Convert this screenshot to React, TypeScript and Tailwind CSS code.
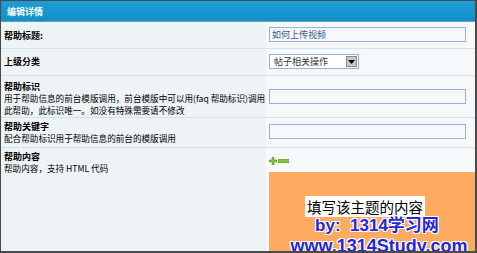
const font = { fontFamily: '"Noto Sans CJK SC", sans-serif' };

const Row = ({ label, desc, height, pt, children }: { label: string; desc?: string[]; height: string; pt: string; children?: React.ReactNode }) => (
    <div className={`grid grid-cols-[265px_1fr] border-b border-[#cfe3f2] ${height}`}>
        <div className={`bg-[#eef3f6] pl-[3px] ${pt} text-[9px] leading-[11px] text-black`}>
            <div className="font-bold">{label}</div>
            {desc && desc.map((d, i) => (
                <div key={i} className="whitespace-nowrap overflow-hidden text-[8.6px] leading-[12px]">{d}</div>
            ))}
        </div>
        <div className="bg-[#f6f8fa] pl-[3px]">{children}</div>
    </div>
);

const TextInput = ({ value = '' }: { value?: string }) => (
    <div className="w-[197px] h-[15px] border border-[#93b3d9] bg-[#f6f8fa] text-[9px] leading-[13px] pl-[2px] text-[#3a5a8a]">{value}</div>
);

const outline = '1px 1px 0 #fff, -1px -1px 0 #fff, 1px -1px 0 #fff, -1px 1px 0 #fff, 0 1px 0 #fff, 1px 0 0 #fff';

const App = () => {
    return (
        <div style={font} className="w-[477px] h-[253px] overflow-hidden border-l border-t border-r-2 border-b-2 border-[#4a4a4a] bg-[#f6f8fa] flex flex-col">
            <div className="h-[21px] shrink-0 bg-gradient-to-b from-[#1d9dd6] to-[#1390c8] border-b border-[#6c9db8] pl-[6px] pt-[5px] text-[9px] leading-[11px] font-bold text-white">
                编辑详情
            </div>

            <div className="flex flex-col">
                <Row label="帮助标题:" height="h-[27px]" pt="pt-[8px]">
                    <div className="pt-[5px]">
                        <TextInput value="如何上传视频" />
                    </div>
                </Row>

                <Row label="上级分类" height="h-[27px]" pt="pt-[7px]">
                    <div className="pt-[5px]">
                        <div className="w-[90px] h-[15px] border border-[#93b3d9] bg-white flex items-center text-[9px] leading-[13px] text-[#333]">
                            <span className="pl-[4px] flex-1">帖子相关操作</span>
                            <span className="w-[11px] h-[11px] mr-[1px] bg-[#c8c8c8] border border-[#8a8a8a] flex items-center justify-center">
                                <svg width="7" height="4" viewBox="0 0 7 4"><path d="M0 0h7L3.5 4z" fill="#000" /></svg>
                            </span>
                        </div>
                    </div>
                </Row>

                <Row
                    label="帮助标识"
                    desc={['用于帮助信息的前台模版调用，前台模版中可以用(faq 帮助标识)调用', '此帮助，此标识唯一。如没有特殊需要请不修改']}
                    height="h-[42px]"
                    pt="pt-[5px]"
                >
                    <div className="pt-[13px]">
                        <TextInput />
                    </div>
                </Row>

                <Row label="帮助关键字" desc={['配合帮助标识用于帮助信息的前台的模版调用']} height="h-[30px]" pt="pt-[3px]">
                    <div className="pt-[6px]">
                        <TextInput />
                    </div>
                </Row>

                <div className="grid grid-cols-[265px_1fr] h-[103px]">
                    <div className="bg-[#eef3f6] pl-[3px] pt-[3px] text-[9px] leading-[11px] text-black">
                        <div className="font-bold">帮助内容</div>
                        <div className="text-[8.6px] leading-[12px]">帮助内容，支持 HTML 代码</div>
                    </div>
                    <div className="bg-[#f6f8fa] pl-[3px] flex flex-col">
                        <div className="flex items-center gap-[1px] h-[24px] pt-[2px]">
                            <svg width="8" height="8" viewBox="0 0 8 8">
                                <path d="M3 0h2v3h3v2H5v3H3V5H0V3h3z" fill="#7cc43a" stroke="#4f8f1e" strokeWidth="0.5" />
                            </svg>
                            <svg width="11" height="4" viewBox="0 0 11 4">
                                <rect x="0.25" y="0.25" width="10.5" height="3.5" fill="#7cc43a" stroke="#4f8f1e" strokeWidth="0.5" />
                            </svg>
                        </div>
                        <div className="flex-1 bg-[#fdab60] flex flex-col items-center pt-[24px]">
                            <div className="bg-white text-black text-[14.5px] leading-[21px] px-[2px] ml-[-14px]">
                                填写该主题的内容
                            </div>
                            <div
                                className="text-[17px] leading-[17px] font-bold text-[#2626d6] mt-[0px] ml-[10px] whitespace-nowrap"
                                style={{ fontFamily: '"Liberation Sans", "Noto Sans CJK SC", sans-serif', textShadow: outline }}
                            >
                                by:&nbsp; 1314学习网
                            </div>
                            <div
                                className="text-[18px] leading-[18px] font-bold text-[#2626d6] mt-[3px] ml-[14px] whitespace-nowrap"
                                style={{ fontFamily: '"Liberation Sans", sans-serif', textShadow: outline }}
                            >
                                www.1314Study.com
                            </div>
                        </div>
                    </div>
                </div>
            </div>
        </div>
    );
};

export default App;
